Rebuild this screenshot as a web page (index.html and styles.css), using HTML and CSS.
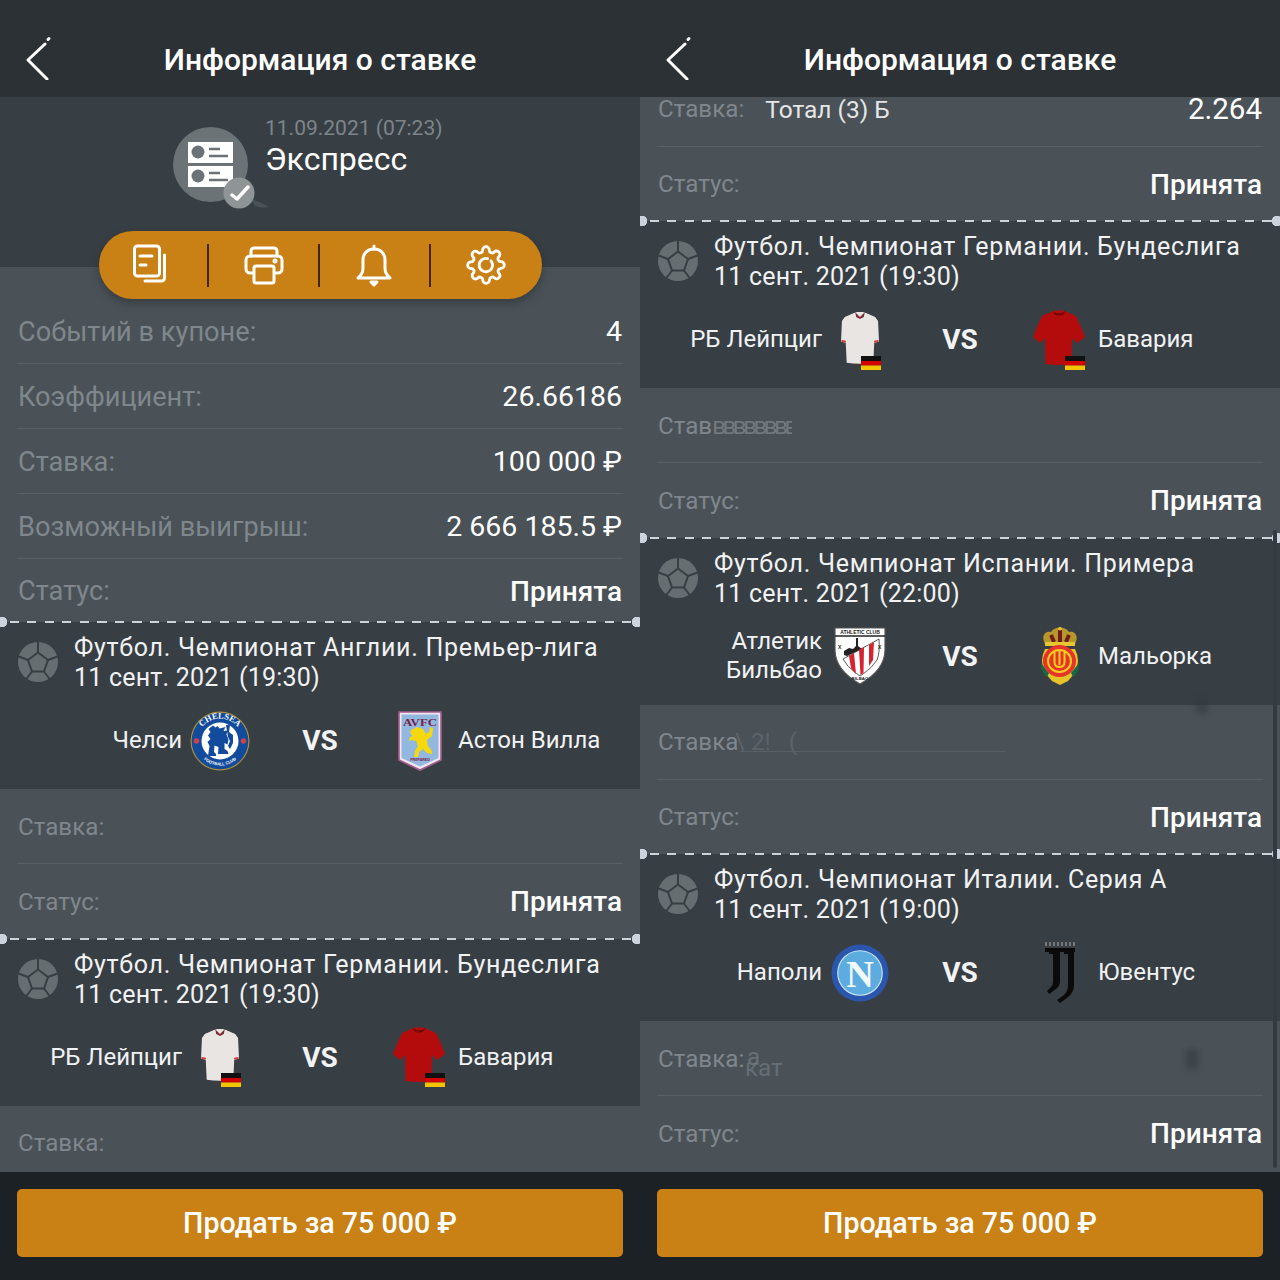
FILE: index.html
```html
<!DOCTYPE html>
<html lang="ru">
<head>
<meta charset="utf-8">
<title>Информация о ставке</title>
<link rel="stylesheet" href="styles.css">
</head>
<body>
<svg class="defs" aria-hidden="true">
  <symbol id="back" viewBox="0 0 30 44"><path d="M21 8 4 24l19 19" fill="none" stroke="#fff" stroke-width="3" stroke-linecap="round" stroke-linejoin="round"/><path d="M25 2.500 24 3.500" fill="none" stroke="#fff" stroke-width="3" stroke-linecap="round"/></symbol>
  <symbol id="ball" viewBox="0 0 40 40"><circle cx="20" cy="20" r="20" fill="#666e72"/><g fill="none" stroke="#383f44" stroke-width="2"><path d="M20 10.500 30 18l-4 11.500H14L10 18z"/><path d="M20 0v10.500M30 18l9.500-3.500M26 29.500l6 8M14 29.500l-6 8M10 18 .5 14.500"/></g></symbol>
  <symbol id="flag-de" viewBox="0 0 20 14"><rect width="20" height="5" fill="#111"/><rect y="5" width="20" height="4.500" fill="#d40000"/><rect y="9.500" width="20" height="4.500" fill="#f5c400"/></symbol>
  <symbol id="shirt-white" viewBox="0 0 40 56"><path d="M13 2l4-1.500h6L27 2l9 4 3 4 1 22-5 1-1 21q-14 2-28 0L5 33l-5-1 1-22 3-4z" fill="#e9e5e3"/><path d="M15 1l5 5 5-5-1 5-4 2-4-2z" fill="#7c2b35"/><path d="M.5 31l4.500 1M35 32l4.500-1" stroke="#d7353c" stroke-width="2"/></symbol>
  <symbol id="shirt-red" viewBox="0 0 52 56"><path d="M18 2l4-1.500h8L34 2l9 4 5 11 4 10-8 6-5-5-.5 26q-13 2-26 0L12 28l-5 5-7-6 4-10 5-11z" fill="#b40c0c"/><path d="M20 1q6 5 12 0l-1 3q-5 3-10 0z" fill="#6f0707"/></symbol>
</svg>

<main class="screen">
  <section class="pane">
    <header class="topbar">
      <svg class="back" aria-hidden="true"><use href="#back"/></svg>
      <h1 class="title">Информация о ставке</h1>
    </header>
    <div class="scroll">
      <div class="summary-head">
        <div class="bet-type">
          <svg class="bet-icon" viewBox="0 0 100 90" aria-hidden="true">
            <circle cx="37.500" cy="37.500" r="37.500" fill="#6b7377"/>
            <rect x="15" y="15" width="45" height="21" fill="#fff"/>
            <rect x="15" y="39" width="45" height="21" fill="#fff"/>
            <circle cx="25" cy="25" r="6.500" fill="#6b7377"/>
            <circle cx="25" cy="49" r="6.500" fill="#6b7377"/>
            <path d="M36 22h11M36 29h19M36 46h11M36 53h19" stroke="#6b7377" stroke-width="2.500"/>
            <path d="M78 72q10 3 18 8-8 2-14-1z" fill="#4a5257"/>
            <circle cx="66" cy="66" r="15.500" fill="#8f9597"/>
            <path d="M59 68l5 4 11-12" fill="none" stroke="#fff" stroke-width="3.500" stroke-linecap="round" stroke-linejoin="round"/>
          </svg>
          <div class="bet-type-text">
            <div class="bet-date">11.09.2021 (07:23)</div>
            <div class="bet-name">Экспресс</div>
          </div>
        </div>
        <div class="actions">
          <div class="action"><svg class="action-icon" viewBox="0 0 44 44" aria-hidden="true"><rect x="3.500" y="3" width="25" height="30" rx="3"/><path d="M9 13h12M9 22h6M33.500 12v23a3 3 0 0 1-3 3H14"/></svg></div>
          <div class="action"><svg class="action-icon" viewBox="0 0 44 44" aria-hidden="true"><path d="M9 13V8a3 3 0 0 1 3-3h20a3 3 0 0 1 3 3v5"/><path d="M10 30H8a4 4 0 0 1-4-4v-9a4 4 0 0 1 4-4h28a4 4 0 0 1 4 4v9a4 4 0 0 1-4 4h-2"/><rect x="12" y="23" width="20" height="17" rx="2"/><circle cx="33" cy="18" r="1"/></svg></div>
          <div class="action"><svg class="action-icon" viewBox="0 0 44 44" aria-hidden="true"><path d="M6 35c3-3 5-5 5-10V17c0-7 5-11 11-11s11 4 11 11v8c0 5 2 7 5 10z"/><path d="M22 3v3M19 39h6l-3 3z"/></svg></div>
          <div class="action"><svg class="action-icon gear" viewBox="0 0 24 24" aria-hidden="true"><path d="M19.400 15a1.650 1.650 0 0 0 .33 1.820l.06.06a2 2 0 0 1 0 2.830 2 2 0 0 1-2.830 0l-.06-.06a1.650 1.650 0 0 0-1.820-.33 1.650 1.650 0 0 0-1 1.510V21a2 2 0 0 1-2 2 2 2 0 0 1-2-2v-.09A1.650 1.650 0 0 0 9 19.400a1.650 1.650 0 0 0-1.820.33l-.06.06a2 2 0 0 1-2.830 0 2 2 0 0 1 0-2.830l.06-.06a1.650 1.650 0 0 0 .33-1.820 1.650 1.650 0 0 0-1.510-1H3a2 2 0 0 1-2-2 2 2 0 0 1 2-2h.09A1.650 1.650 0 0 0 4.600 9a1.650 1.650 0 0 0-.33-1.820l-.06-.06a2 2 0 0 1 0-2.830 2 2 0 0 1 2.830 0l.06.06a1.650 1.650 0 0 0 1.820.33H9a1.650 1.650 0 0 0 1-1.510V3a2 2 0 0 1 2-2 2 2 0 0 1 2 2v.09a1.650 1.650 0 0 0 1 1.510 1.650 1.650 0 0 0 1.820-.33l.06-.06a2 2 0 0 1 2.830 0 2 2 0 0 1 0 2.830l-.06.06a1.650 1.650 0 0 0-.33 1.820V9a1.650 1.650 0 0 0 1.510 1H21a2 2 0 0 1 2 2 2 2 0 0 1-2 2h-.09a1.650 1.650 0 0 0-1.510 1z"/><path d="M15 9.500a4 4 0 1 1-2-1.300"/></svg></div>
        </div>
      </div>

      <div class="rows rows-summary">
        <div class="row row-big"><span class="label">Событий в купоне:</span><span class="value">4</span></div>
        <div class="row row-big"><span class="label">Коэффициент:</span><span class="value">26.66186</span></div>
        <div class="row row-big"><span class="label">Ставка:</span><span class="value">100 000 ₽</span></div>
        <div class="row row-big"><span class="label">Возможный выигрыш:</span><span class="value">2 666 185.5 ₽</span></div>
        <div class="row row-big"><span class="label">Статус:</span><span class="value strong">Принята</span></div>
      </div>

      <article class="match">
        <div class="match-head">
          <svg class="ball" aria-hidden="true"><use href="#ball"/></svg>
          <div class="match-title"><div class="league">Футбол. Чемпионат Англии. Премьер-лига</div><div class="kickoff">11 сент. 2021 (19:30)</div></div>
        </div>
        <div class="teams">
          <div class="team-name home">Челси</div>
          <svg class="logo logo-chelsea" viewBox="0 0 60 60" aria-hidden="true">
            <circle cx="30" cy="30" r="29.500" fill="#a98f3c"/><circle cx="30" cy="30" r="28.300" fill="#124a9c"/><circle cx="30" cy="30" r="18.500" fill="#fff"/>
            <path id="cTop" d="M7.500 30a22.500 22.500 0 0 1 45 0" fill="none"/><path id="cBot" d="M5.500 30a24.500 24.500 0 0 0 49 0" fill="none"/>
            <text class="crest-serif" font-size="8.500" fill="#fff"><textPath href="#cTop" startOffset="50%" text-anchor="middle">CHELSEA</textPath></text>
            <text class="crest-sans" font-size="4.200" fill="#fff"><textPath href="#cBot" startOffset="50%" text-anchor="middle">FOOTBALL CLUB</textPath></text>
            <circle cx="6.500" cy="30" r="2.800" fill="#c8434d"/><circle cx="53.500" cy="30" r="2.800" fill="#c8434d"/>
            <path d="M23 14.500l2.500 2 2-1.500 2 2.500 6-1.500-2 4 4-.5-1 4 2 5-1 5-3-1.500v6l3 2 1 3H28l.5-7-4-1.500-.5 6.500 2 2v2h-8l1.500-10-2-4 3-3-2.500-3.500 2.500-3.500-2-3z" fill="#124a9c"/>
            <path d="M36 14l4 0-1 7 4 3v8l-3 6-2-3 2-5-2-4z" fill="#124a9c"/>
          </svg>
          <div class="vs">VS</div>
          <svg class="logo logo-villa" viewBox="0 0 44 60" aria-hidden="true">
            <path d="M1 1h42v48L22 59 1 49z" fill="#f2e6ee" stroke="#a45d90" stroke-width="1.600"/>
            <path d="M3.500 3.500h37V47L22 55.500 3.500 47z" fill="#93b8df"/>
            <text class="crest-serif" x="22" y="14.500" font-size="11" text-anchor="middle" textLength="34" lengthAdjust="spacingAndGlyphs" fill="#7a2046">AVFC</text>
            <path d="M13 19l6-3 6 2 3 5 3-2 1-5 3 1-1 8-5 4 1 6 4 5v3l-5-1-4-4-4 3-1 5h-4l1-6 3-5-2-5-4-1-3 1 1-4 3-1-3-3z" fill="#f6d80c"/>
            <text class="crest-sans" x="22" y="50" font-size="3.600" text-anchor="middle" fill="#7a2046">PREPARED</text>
          </svg>
          <div class="team-name away">Астон Вилла</div>
        </div>
      </article>
      <div class="rows">
        <div class="row"><span class="label">Ставка:</span></div>
        <div class="row"><span class="label">Статус:</span><span class="value strong">Принята</span></div>
      </div>

      <article class="match">
        <div class="match-head">
          <svg class="ball" aria-hidden="true"><use href="#ball"/></svg>
          <div class="match-title"><div class="league">Футбол. Чемпионат Германии. Бундеслига</div><div class="kickoff">11 сент. 2021 (19:30)</div></div>
        </div>
        <div class="teams">
          <div class="team-name home">РБ Лейпциг</div>
          <div class="kit kit-white"><svg class="shirt" aria-hidden="true"><use href="#shirt-white"/></svg><svg class="flag" aria-hidden="true"><use href="#flag-de"/></svg></div>
          <div class="vs">VS</div>
          <div class="kit kit-red"><svg class="shirt" aria-hidden="true"><use href="#shirt-red"/></svg><svg class="flag" aria-hidden="true"><use href="#flag-de"/></svg></div>
          <div class="team-name away">Бавария</div>
        </div>
      </article>
      <div class="rows">
        <div class="row"><span class="label">Ставка:</span></div>
      </div>
    </div>
    <footer class="bottom"><button class="sell">Продать за 75 000 ₽</button></footer>
  </section>

  <section class="pane">
    <header class="topbar">
      <svg class="back" aria-hidden="true"><use href="#back"/></svg>
      <h1 class="title">Информация о ставке</h1>
    </header>
    <div class="scroll">
      <div class="scrolled">
        <div class="rows">
          <div class="row"><span class="label">Ставка:</span><span class="pick">Тотал (3) Б</span><span class="value odds">2.264</span></div>
          <div class="row"><span class="label">Статус:</span><span class="value strong">Принята</span></div>
        </div>

        <article class="match">
          <div class="match-head">
            <svg class="ball" aria-hidden="true"><use href="#ball"/></svg>
            <div class="match-title"><div class="league">Футбол. Чемпионат Германии. Бундеслига</div><div class="kickoff">11 сент. 2021 (19:30)</div></div>
          </div>
          <div class="teams">
            <div class="team-name home">РБ Лейпциг</div>
            <div class="kit kit-white"><svg class="shirt" aria-hidden="true"><use href="#shirt-white"/></svg><svg class="flag" aria-hidden="true"><use href="#flag-de"/></svg></div>
            <div class="vs">VS</div>
            <div class="kit kit-red"><svg class="shirt" aria-hidden="true"><use href="#shirt-red"/></svg><svg class="flag" aria-hidden="true"><use href="#flag-de"/></svg></div>
            <div class="team-name away">Бавария</div>
          </div>
        </article>
        <div class="rows">
          <div class="row"><span class="label smear">Став<span class="smear-tail">ввввввввк</span></span></div>
          <div class="row"><span class="label">Статус:</span><span class="value strong">Принята</span></div>
        </div>

        <article class="match">
          <div class="match-head">
            <svg class="ball" aria-hidden="true"><use href="#ball"/></svg>
            <div class="match-title"><div class="league">Футбол. Чемпионат Испании. Примера</div><div class="kickoff">11 сент. 2021 (22:00)</div></div>
          </div>
          <div class="teams">
            <div class="team-name home">Атлетик<br>Бильбао</div>
            <svg class="logo logo-bilbao" viewBox="0 0 52 58" aria-hidden="true">
              <path d="M1 1h50v22q0 20-25 34Q1 43 1 23z" fill="#fff" stroke="#555" stroke-width="1.200"/>
              <path d="M1 9h50" stroke="#222" stroke-width="1.400"/>
              <text class="crest-sans" x="26" y="7" font-size="5" text-anchor="middle" fill="#222">ATHLETIC CLUB</text>
              <path d="M10 28v-4l5-3 4 1 3-3V11h2v8l4 3-15 7z" fill="#222"/>
              <path d="M9 32 45 12q1 14-2 21-5 8-14 14l-3 2-4-3q-9-6-13-14z" fill="#fff" stroke="#333" stroke-width=".8"/>
              <path d="M15 29l5-3 2 21-3-3-2-3zM25 23l5-3-.5 26-3 2zM35 18l5-3-1 18-4 6z" fill="#d6232f"/>
              <text class="crest-sans" x="4" y="22" font-size="5" fill="#222">X</text><text class="crest-sans" x="44" y="22" font-size="5" fill="#222">X</text>
              <text class="crest-sans" x="26" y="53" font-size="4.400" text-anchor="middle" fill="#222">BILBAO</text>
            </svg>
            <div class="vs">VS</div>
            <svg class="logo logo-mallorca" viewBox="0 0 40 58" aria-hidden="true">
              <path d="M5 22q-6 12 0 24l7 8 8 4 8-4 7-8q6-12 0-24z" fill="#e4c428"/>
              <path d="M1 36q0 10 6 14l2-4zM39 36q0 10-6 14l-2-4z" fill="#0f6b45"/>
              <path d="M6 18C0 10 5 3 11 5c3-6 15-6 18 0 6-2 11 5 5 13z" fill="#b9962a"/>
              <path d="M11 8l3 7M20 3v12M29 8l-3 7" stroke="#6e1b1b" stroke-width="4"/>
              <rect x="5" y="15" width="30" height="4" fill="#e6c732"/>
              <circle cx="20" cy="1.800" r="1.800" fill="#e6c732"/>
              <ellipse cx="19.500" cy="34" rx="16.500" ry="16" fill="#e6332a"/>
              <ellipse cx="19.500" cy="34" rx="11.500" ry="11" fill="none" stroke="#f5cf1e" stroke-width="2"/>
              <path d="M14.500 25v10q0 5 5 5t5-5V25M19.500 23v15" fill="none" stroke="#f5cf1e" stroke-width="2"/>
            </svg>
            <div class="team-name away">Мальорка</div>
          </div>
        </article>
        <div class="rows">
          <div class="row"><span class="label">Ставка</span><span class="ghost ghost-a">\ 2!&nbsp;&nbsp;&nbsp;(</span><span class="ghost-line"></span><span class="smudge smudge-a"></span></div>
          <div class="row"><span class="label">Статус:</span><span class="value strong">Принята</span></div>
        </div>

        <article class="match">
          <div class="match-head">
            <svg class="ball" aria-hidden="true"><use href="#ball"/></svg>
            <div class="match-title"><div class="league">Футбол. Чемпионат Италии. Серия А</div><div class="kickoff">11 сент. 2021 (19:00)</div></div>
          </div>
          <div class="teams">
            <div class="team-name home">Наполи</div>
            <svg class="logo logo-napoli" viewBox="0 0 60 60" aria-hidden="true">
              <circle cx="30" cy="30" r="29.500" fill="#2a56ad"/><circle cx="30" cy="30" r="23" fill="#5cace0" stroke="#c9e4f4" stroke-width="1.200"/>
              <text class="crest-serif" x="30" y="44" font-size="40" text-anchor="middle" fill="#f2f9fc">N</text>
            </svg>
            <div class="vs">VS</div>
            <svg class="logo logo-juve" viewBox="0 0 30 62" aria-hidden="true">
              <path d="M1 0v4M5 0v4M9 0v4M13 0v4M17 0v4M21 0v4M25 0v4M29 0v4" stroke="#777" stroke-width="2"/>
              <path d="M0 6h30v4H0z" fill="#0b0b0b"/>
              <path d="M4 6h11v33q0 5-4 8l-7 5-2-3 4-4q2-2 2-5V12H4z" fill="#0b0b0b"/>
              <path d="M19 6h10v37q0 8-7 13l-7 5-3-3 7-5q4-4 4-10V12h-4z" fill="#0b0b0b"/>
            </svg>
            <div class="team-name away">Ювентус</div>
          </div>
        </article>
        <div class="rows">
          <div class="row"><span class="label">Ставка:</span><span class="ghost ghost-b">а</span><span class="ghost ghost-c">кат</span><span class="smudge smudge-b"></span></div>
          <div class="row"><span class="label">Статус:</span><span class="value strong">Принята</span></div>
        </div>
      </div>
      <div class="scrollbar"></div>
    </div>
    <footer class="bottom"><button class="sell">Продать за 75 000 ₽</button></footer>
  </section>
</main>
</body>
</html>
```

FILE: styles.css
```css
* { box-sizing: border-box; }
html, body { margin: 0; padding: 0; }
body { background: #1c2126; color: #fff; font-family: Roboto, "Noto Sans", sans-serif; }

.defs { position: absolute; width: 0; height: 0; overflow: hidden; }
.crest-serif { font-family: "Liberation Serif", serif; font-weight: 700; }
.crest-sans { font-family: "Liberation Sans", sans-serif; font-weight: 700; }

.screen { display: grid; grid-template-columns: 640px 640px; height: 1280px; overflow: hidden; }
.pane { display: flex; flex-direction: column; height: 1280px; min-width: 0; }

.topbar { position: relative; flex: 0 0 97px; background: #2c3136; display: flex; align-items: center; justify-content: center; padding-top: 22px; }
.back { position: absolute; left: 24px; top: 36px; width: 30px; height: 44px; }
.title { margin: 0; font-size: 30px; font-weight: 500; line-height: 40px; }

.scroll { position: relative; flex: 1 1 0; overflow: hidden; background: #4a5257; }
.scrolled { margin-top: -25.500px; }

.summary-head { background: #383f44; height: 170px; position: relative; z-index: 1; display: flex; flex-direction: column; }
.bet-type { flex: none; display: flex; gap: 17px; padding: 18px 0 0 173px; height: 134px; }
.bet-icon { width: 100px; height: 90px; margin-top: 12px; margin-right: -25px; flex: none; }
.bet-type-text { display: flex; flex-direction: column; }
.bet-date { font-size: 21px; line-height: 26px; color: #7d858a; }
.bet-name { font-size: 32px; line-height: 37px; color: #fff; }

.actions { flex: none; width: 443px; height: 68px; margin: 0 auto; background: #c98015; border-radius: 34px; display: grid; grid-template-columns: repeat(4, 1fr); align-items: center; box-shadow: 0 4px 8px rgba(20, 24, 28, .35); }
.action { display: flex; align-items: center; justify-content: center; height: 43px; border-right: 2px solid #40260a; }
.action:last-child { border-right: 0; }
.action-icon { width: 44px; height: 44px; fill: none; stroke: #fff; stroke-width: 3; stroke-linecap: round; stroke-linejoin: round; }
.action-icon.gear { width: 40px; height: 40px; stroke-width: 1.700; }

.rows { background: #4a5257; padding: 0 17px; }
.rows-summary { padding-top: 32px; }
.row { position: relative; height: 75px; padding-top: 1px; display: flex; align-items: center; border-bottom: 1px solid #596166; }
.row:last-child { border-bottom: 0; height: 74.500px; }
.row-big { height: 65px; }
.row-big:last-child { height: 63px; }
.label { font-size: 24.200px; color: #7f878c; padding-left: 1px; white-space: nowrap; }
.row-big .label { font-size: 27.200px; }
.value { margin-left: auto; margin-right: 1px; font-size: 28.500px; color: #fff; white-space: nowrap; }
.value.strong { font-weight: 500; font-size: 28px; }
.value.odds { font-size: 29.500px; }
.pick { margin-left: 21px; font-size: 24.500px; color: #e4e6e7; }

.smear { width: 135px; overflow: hidden; }
.smear-tail { letter-spacing: -3.500px; opacity: .75; }
.ghost { position: absolute; font-size: 24.200px; color: rgba(127, 135, 140, .35); white-space: nowrap; }
.ghost-a { left: 78px; }
.ghost-b { left: 90px; top: 22px; color: rgba(127, 135, 140, .6); }
.ghost-c { left: 88px; top: 33px; color: rgba(127, 135, 140, .55); }
.ghost-line { position: absolute; left: 83px; width: 265px; top: 46px; height: 1px; background: #566065; }
.smudge { position: absolute; background: rgba(50, 56, 60, .6); filter: blur(3px); }
.smudge-a { right: 55px; top: -4px; width: 12px; height: 12px; }
.smudge-b { right: 65px; top: 28px; width: 12px; height: 20px; }

.match { position: relative; height: 167px; background: #383f44; padding: 11px 18px 0; }
.match::before { content: ""; position: absolute; left: 10px; right: 8px; top: -1px; height: 2px; background: repeating-linear-gradient(90deg, #cfd3d6 0 9px, transparent 9px 17.500px); }
.match::after { content: ""; position: absolute; left: -3px; right: -3px; top: -5px; height: 10px; background: radial-gradient(circle at 5px 5px, #ccd3dc 5px, transparent 5.500px), radial-gradient(circle at calc(100% - 6px) 5px, #ccd3dc 5px, transparent 5.500px); }
.match-head { display: flex; gap: 16px; }
.ball { width: 40px; height: 40px; margin-top: 9px; flex: none; }
.match-title { font-size: 25px; line-height: 30px; color: #f1f2f3; white-space: nowrap; }
.league { letter-spacing: .7px; }
.kickoff { letter-spacing: .2px; }

.teams { display: grid; grid-template-columns: 164px 76px 124px 76px 1fr; height: 95px; align-items: center; justify-items: center; margin: 0 -18px 0 0; }
.team-name { font-size: 24px; line-height: 29px; color: #f1f2f3; white-space: nowrap; }
.team-name.home { justify-self: end; text-align: right; }
.team-name.away { justify-self: start; }
.vs { font-size: 28px; font-weight: 700; color: #f1f3f5; }

.logo { display: block; }
.logo-chelsea { width: 60px; height: 60px; }
.logo-villa { width: 44px; height: 60px; }
.logo-bilbao { width: 52px; height: 58px; }
.logo-mallorca { width: 40px; height: 58px; }
.logo-napoli { width: 58px; height: 58px; }
.logo-juve { width: 30px; height: 62px; }

.kit { position: relative; width: 76px; height: 60px; }
.shirt { display: block; height: 56px; margin: 0 auto; }
.kit-white .shirt { width: 38px; }
.kit-red .shirt { width: 52px; transform: translateX(-1px); }
.flag { position: absolute; width: 20px; height: 14px; bottom: 0; }
.kit-white .flag { left: 39px; }
.kit-red .flag { left: 43px; }

.scrollbar { position: absolute; right: 3px; top: 433px; bottom: 4px; width: 4px; border-radius: 2px; background: #343a3f; }

.bottom { flex: 0 0 108px; background: #1c2126; padding: 17px; }
.sell { display: block; width: 100%; height: 68px; border: 0; border-radius: 5px; background: #c98015; color: #fff; font: 500 28.600px Roboto, "Noto Sans", sans-serif; }
```
